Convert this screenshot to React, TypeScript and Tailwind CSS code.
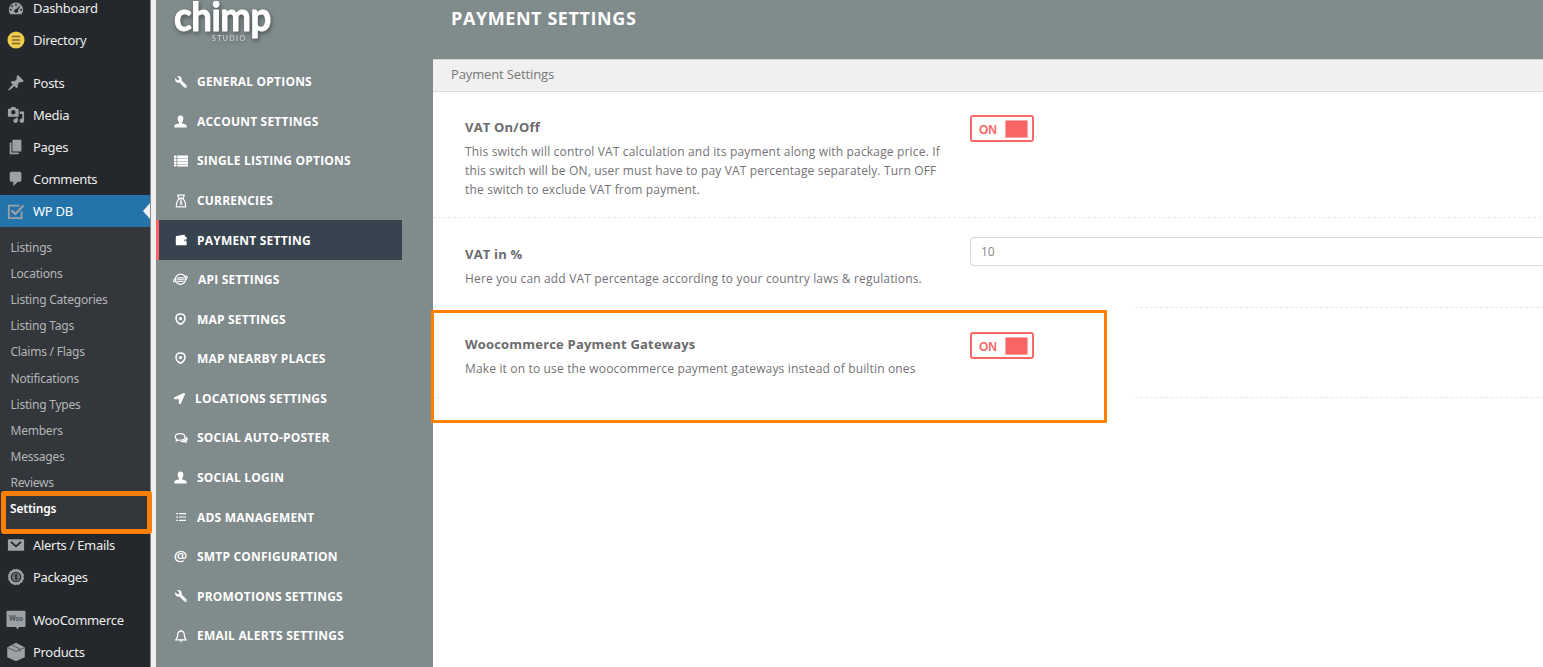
import React from "react";
import { FaWrench, FaLocationArrow } from "react-icons/fa";

const Svg = ({ children, className = "", vb = "0 0 20 20" }: { children: React.ReactNode; className?: string; vb?: string }) => (
  <svg viewBox={vb} className={className} fill="currentColor" aria-hidden="true">
    {children}
  </svg>
);

const d = "size-[18px]";

const dashIcons: Record<string, React.ReactNode> = {
  dashboard: (
    <Svg className={d}>
      <path
        fillRule="evenodd"
        d="M3.8 17h12.4A8 8 0 0 0 18 12a8 8 0 0 0-16 0c0 1.8.7 3.600 1.800 5zM10 5.200a1.100 1.100 0 1 1 0 2.200 1.100 1.100 0 0 1 0-2.200zM5.700 6.900a1.100 1.100 0 1 1 0 2.200 1.100 1.100 0 0 1 0-2.200zM15.200 6.500l-3 5.900c.6 1.300-.6 3-2.200 3-1.400 0-2.500-1.500-1.900-2.900.3-.8 1.200-1.200 2-1.200zM4.200 10.900a1.100 1.100 0 1 1 0 2.200 1.100 1.100 0 0 1 0-2.200zM15.800 10.900a1.100 1.100 0 1 1 0 2.200 1.100 1.100 0 0 1 0-2.200z"
      />
    </Svg>
  ),
  directory: (
    <Svg className={d}>
      <circle cx="10" cy="10" r="9.500" fill="#f0cb4b" />
      <path d="M5.500 6.200h9M5.500 10h9M5.500 13.800h9" stroke="#7b6a30" strokeWidth="1.600" />
    </Svg>
  ),
  posts: (
    <Svg className={d}>
      <path d="M10.440 3.020l1.820-1.820 6.360 6.350-1.830 1.820c-1.050-.68-2.480-.57-3.410.36l-.75.75c-.92.93-1.040 2.350-.35 3.410l-1.830 1.820-2.410-2.410-2.800 2.790c-.42.42-3.380 2.710-3.800 2.290s1.860-3.390 2.280-3.810l2.790-2.790L4.100 9.360l1.830-1.820c1.050.69 2.480.57 3.400-.36l.75-.75c.93-.92 1.050-2.350.36-3.410z" />
    </Svg>
  ),
  media: (
    <Svg className={d}>
      <path
        fillRule="evenodd"
        d="M13 11V4c0-.55-.45-1-1-1h-1.670L9 1H5L3.670 3H2c-.55 0-1 .45-1 1v7c0 .55.45 1 1 1h10c.55 0 1-.45 1-1zM7 4.500c1.380 0 2.500 1.120 2.500 2.500S8.380 9.500 7 9.500 4.500 8.380 4.500 7 5.620 4.500 7 4.500zM14 6h5v10.500c0 1.380-1.120 2.500-2.500 2.500S14 17.880 14 16.500s1.120-2.500 2.500-2.500c.17 0 .34.02.5.05V9h-3V6zm-4 8.050V13h2v3.500c0 1.380-1.120 2.500-2.500 2.500S7 17.880 7 16.500 8.120 14 9.500 14c.17 0 .34.02.5.05z"
      />
    </Svg>
  ),
  pages: (
    <Svg className={d}>
      <path d="M6 15V2h10v13H6zm-1 1h8v2H3V5h2v11z" />
    </Svg>
  ),
  comments: (
    <Svg className={d}>
      <path d="M5 2h9c1.100 0 2 .9 2 2v7c0 1.100-.9 2-2 2h-2l-5 5v-5H5c-1.100 0-2-.9-2-2V4c0-1.100.9-2 2-2z" />
    </Svg>
  ),
  wpdb: (
    <Svg className={d}>
      <path d="M16.200 10.500V18H2V4h12" fill="none" stroke="currentColor" strokeWidth="2" />
      <path d="M5 9.300l4.300 4L18.300 3.800" fill="none" stroke="currentColor" strokeWidth="2.300" />
    </Svg>
  ),
  email: (
    <Svg className={d}>
      <rect x="1" y="3.500" width="18" height="13" rx="0.800" />
      <path d="M4.500 6.500l5.500 5 5.500-5" fill="none" stroke="#24272b" strokeWidth="2" />
    </Svg>
  ),
  packages: (
    <Svg className={d}>
      <circle cx="10" cy="10" r="7.200" fill="none" stroke="currentColor" strokeWidth="2.600" />
      <circle cx="10" cy="10" r="8.600" fill="none" stroke="currentColor" strokeWidth="1" strokeDasharray="3 1.500" />
      <circle cx="10" cy="10" r="4.600" fill="#6f7377" />
      <path d="M11.500 8.300c-.5-.9-2.800-.9-2.800.3 0 1.500 2.800.9 2.800 2.500 0 1.300-2.400 1.300-3 .2M10.100 6.500v7" fill="none" stroke="#24272b" strokeWidth="1.100" />
    </Svg>
  ),
  woo: (
    <svg viewBox="0 0 20 20" className="size-[20px]" aria-hidden="true">
      <path d="M1.500.800h17a1 1 0 0 1 1 1V16a1 1 0 0 1-1 1H13l-1.500 2.500L10 17H1.500a1 1 0 0 1-1-1V1.800a1 1 0 0 1 1-1z" fill="#9ca1a6" />
      <text x="10" y="11.200" fontSize="6.500" fontWeight="700" fontFamily="Lato, sans-serif" textAnchor="middle" fill="#44484d">
        Woo
      </text>
    </svg>
  ),
  products: (
    <Svg className="size-[20px]">
      <path d="M10 .8l8.800 4.500v10L10 19.300l-8.800-4v-10z" />
      <path d="M1.500 5.500L10 9.500l8.500-4M5.500 2.800l8.600 4.300v2.500" fill="none" stroke="#4c5055" strokeWidth=".9" />
    </Svg>
  ),
};

const menu = [
  ["dashboard", "Dashboard"],
  ["directory", "Directory"],
  ["", ""],
  ["posts", "Posts"],
  ["media", "Media"],
  ["pages", "Pages"],
  ["comments", "Comments"],
];

const submenu = [
  "Listings",
  "Locations",
  "Listing Categories",
  "Listing Tags",
  "Claims / Flags",
  "Notifications",
  "Listing Types",
  "Members",
  "Messages",
  "Reviews",
  "Settings",
];

const lower = [
  ["email", "Alerts / Emails"],
  ["packages", "Packages"],
  ["", ""],
  ["woo", "WooCommerce"],
  ["products", "Products"],
];

function MenuRow({ icon, label, active = false }: { icon: string; label: string; active?: boolean }) {
  if (!icon) return <li className="h-[11px]" />;
  return (
    <li className={active ? "relative flex h-8 items-center bg-[#2573ab] text-white" : "flex h-8 items-center text-[#eceded]"}>
      <span className="flex w-[33px] shrink-0 items-center justify-center pr-[1px] text-[#9ca1a6]">{dashIcons[icon]}</span>
      <span className="text-[13px] leading-[18px] tracking-[-0.3px] whitespace-nowrap">{label}</span>
      {active && (
        <svg viewBox="0 0 7 16" className="absolute top-2 right-0 h-4 w-[7px]" fill="#f0f0f1">
          <path d="M7 0v16L0 8z" />
        </svg>
      )}
    </li>
  );
}

const s = "size-[13px]";
const person = (
  <Svg vb="0 0 16 16" className={s}>
    <path d="M8 .5c2.200 0 3.500 1.500 3.500 4 0 1.800-.8 3.500-1.700 4.300v1.300l4.500 1.700c.9.4 1.300 1.200 1.300 3.700H.4c0-2.500.4-3.300 1.300-3.700l4.500-1.700V8.800C5.300 8 4.500 6.300 4.500 4.500c0-2.500 1.300-4 3.500-4z" />
  </Svg>
);
const pin = (
  <Svg vb="0 0 16 16" className={s}>
    <path d="M8 1.200c3.200 0 5.500 2.200 5.500 5.200 0 3.300-2.600 6-5.500 7.400C5.100 12.400 2.500 9.700 2.500 6.400 2.500 3.400 4.800 1.200 8 1.200z" fill="none" stroke="currentColor" strokeWidth="1.900" />
    <circle cx="8" cy="6.800" r="2" />
  </Svg>
);

const options: { label: string; icon: React.ReactNode; gap?: string }[] = [
  { label: "GENERAL OPTIONS", icon: <FaWrench className="size-[12px] -scale-x-100" /> },
  { label: "ACCOUNT SETTINGS", icon: person },
  {
    label: "SINGLE LISTING OPTIONS",
    icon: (
      <Svg vb="0 0 14 12" className="h-[12px] w-[14px]">
        <path d="M0 .5h2.500V3H0zM3.300.5H14V3H3.300zM0 3.600h2.500V6H0zM3.300 3.600H14V6H3.300zM0 6.600h2.500V9H0zM3.300 6.600H14V9H3.300zM0 9.600h2.500v1.900H0zM3.300 9.600H14v1.900H3.300z" />
      </Svg>
    ),
  },
  {
    label: "CURRENCIES",
    icon: (
      <Svg vb="0 0 14 16" className="h-[14px] w-[12px]">
        <path d="M4.300 4.600L3.200 1.200h7.600L9.700 4.600zM4.500 5.500h5c2 1.800 2.900 4 2.900 9.300H1.600c0-5.300.9-7.500 2.900-9.300z" fill="none" stroke="currentColor" strokeWidth="1.400" />
        <path d="M8.500 8.300c-.8-.7-2.700-.5-2.700.6 0 1.300 2.700.7 2.700 2.100 0 1.100-2.100 1.200-3 .4M7 7v6" fill="none" stroke="currentColor" strokeWidth="1" />
      </Svg>
    ),
  },
  {
    label: "PAYMENT SETTING",
    icon: (
      <Svg vb="0 0 12 12" className="h-[12px] w-[12px]">
        <path fillRule="evenodd" d="M.8 3C.8 2.300 1.300 2 2 1.900L8.500.8c.9-.1 1.400.2 1.400 1v1h.6c.7 0 1.200.4 1.200 1v1.600H10c-1.200 0-1.200 1.900 0 1.900h1.700v2.900c0 .7-.5 1.100-1.200 1.100H1.900C1.200 11.300.8 10.900.8 10.200z" />
        <circle cx="10.300" cy="6.350" r=".6" />
      </Svg>
    ),
  },
  {
    label: "API SETTINGS",
    gap: "ml-[10px]",
    icon: (
      <Svg vb="0 0 16 14" className="h-[13px] w-[15px]">
        <circle cx="8" cy="6.700" r="5.500" fill="none" stroke="currentColor" strokeWidth="1.400" />
        <path d="M3 5.500C-.5 8-.2 9.800 2.800 9.300M13 7.500c3.500-2.500 3-4.600-.5-4" fill="none" stroke="currentColor" strokeWidth="1.200" />
        <path d="M4.500 4.700h7v1.200h-7zM3.800 6.700h8.400v1.200H3.800zM5 8.700h6v.9H5z" />
      </Svg>
    ),
  },
  { label: "MAP SETTINGS", icon: pin },
  { label: "MAP NEARBY PLACES", icon: pin },
  { label: "LOCATIONS SETTINGS", gap: "-ml-px pl-[8px]", icon: <FaLocationArrow className="mr-[2px] size-[11px]" /> },
  {
    label: "SOCIAL AUTO-POSTER",
    icon: (
      <Svg vb="0 0 16 14" className="h-[12px] w-[14px]">
        <path d="M7 2c3.300 0 5.600 1.600 5.600 3.800S10.300 9.600 7 9.600c-.6 0-1.300-.1-1.800-.2L2.500 10.600l.7-2C2 7.900 1.300 6.900 1.300 5.800 1.300 3.600 3.700 2 7 2z" fill="none" stroke="currentColor" strokeWidth="1.400" />
        <path d="M13.700 5.200c1.400.7 2.200 1.800 2.200 3 0 1.200-.7 2.200-1.700 2.800l.9 2.500-3-1.600c-2.200.3-4.300-.3-5.300-1.400 4.200 0 7.500-2 6.900-5.300z" />
      </Svg>
    ),
  },
  { label: "SOCIAL LOGIN", icon: person },
  {
    label: "ADS MANAGEMENT",
    icon: (
      <Svg vb="0 0 10 10" className="size-[10px]">
        <path d="M.3 1h1.700v1.300H.3zM3 1h7v1.200H3zM.3 4.400h1.700v1.300H.3zM3 4.400h7v1.200H3zM.3 7.800h1.700v1.300H.3zM3 7.800h7V9H3z" />
      </Svg>
    ),
  },
  { label: "SMTP CONFIGURATION", icon: <span className="-mt-[3px] block text-[15px] leading-none font-semibold">@</span> },
  { label: "PROMOTIONS SETTINGS", icon: <FaWrench className="size-[12px] -scale-x-100" /> },
  {
    label: "EMAIL ALERTS SETTINGS",
    icon: (
      <Svg vb="0 0 14 16" className="h-[14px] w-[12px]">
        <path d="M7 2.200c-2.700 0-3.800 1.900-3.800 4.300 0 3-.6 4.500-2.300 6h12.200c-1.700-1.500-2.300-3-2.300-6 0-2.400-1.100-4.300-3.800-4.300z" fill="none" stroke="currentColor" strokeWidth="1.400" />
        <path d="M6.300.600h1.400v1.500H6.300zM5.300 13.200h3.400c0 2.200-3.400 2.200-3.400 0z" />
      </Svg>
    ),
  },
];

function Toggle() {
  return (
    <div className="flex h-[27px] w-[64px] items-center justify-between rounded-[3px] border-2 border-[#f96868] bg-white pr-[4px] pl-[7px]">
      <span className="mt-[3px] font-['Liberation_Sans',sans-serif] text-[12px] leading-none font-bold text-[#f96868]">ON</span>
      <span className="h-[18px] w-[23px] rounded-[1px] border border-[#fba5a5] bg-[#f96464]" />
    </div>
  );
}

const dash = "h-px bg-[repeating-linear-gradient(90deg,#e9e9e9_0_3px,transparent_3px_5px)]";

function Divider({ stub }: { stub?: string }) {
  if (!stub) return <div className={dash} />;
  return (
    <div className="flex h-px justify-between">
      <div className={dash + " " + stub} />
      <div className={dash + " w-[408px]"} />
    </div>
  );
}

function Field({ title, desc, height, pad, stub, children }: { title: string; desc: string; height: string; pad: string; stub?: string; children: React.ReactNode }) {
  return (
    <section className={"flex flex-col justify-between " + height}>
      <div className={"flex pl-8 " + pad}>
        <div className="w-[505px] shrink-0 pt-[6px] pr-[20px]">
          <h3 className="text-[13px] leading-[20px] font-bold tracking-[0.19px] text-[#6b6b6d]">{title}</h3>
          <p className="mt-[5px] text-[12px] leading-[19px] tracking-[0.16px] whitespace-pre text-[#737376]">{desc}</p>
        </div>
        <div className="min-w-0 flex-1">{children}</div>
      </div>
      <Divider stub={stub} />
    </section>
  );
}

export default function App() {
  return (
    <div className="relative flex h-[667px] w-[1543px] overflow-hidden bg-white font-['Open_Sans',sans-serif]">
      <aside className="h-full w-[151px] shrink-0 overflow-hidden border-r border-[#85888b] bg-[#24272b] font-['Noto_Sans','Open_Sans',sans-serif]">
        <ul className="-mt-2">
          {menu.map(([icon, label], i) => (
            <MenuRow key={i} icon={icon} label={label} />
          ))}
          <MenuRow icon="wpdb" label="WP DB" active />
          <li className="bg-[#33363b] pt-[8px] pb-[7px]">
            <ul>
              {submenu.map((item) => (
                <li
                  key={item}
                  className={
                    item === "Settings"
                      ? "flex h-[26.1px] items-center pl-[10px] text-[12px] font-semibold tracking-[-0.2px] text-white"
                      : "flex h-[26.1px] items-center pl-[10.5px] text-[12px] tracking-[-0.22px] text-[#b4b6b8]"
                  }
                >
                  {item}
                </li>
              ))}
            </ul>
          </li>
          {lower.map(([icon, label], i) => (
            <MenuRow key={i} icon={icon} label={label} />
          ))}
        </ul>
      </aside>
      <div className="h-full w-[5px] shrink-0 bg-[#f0f0f1]" />
      <div className="flex h-full min-w-0 flex-1 bg-[#808b8c]">
        <nav className="w-[277px] shrink-0">
          <div className="h-[62px] pt-px pl-[18px]">
            <svg viewBox="0 0 104 46" className="h-[46px] w-[104px] [filter:drop-shadow(1px_2px_2px_rgba(0,0,0,0.4))]" fill="#fff">
              <g transform="translate(0 30) scale(0.92 1)">
                <text x="0" y="0" fontFamily="Lato, sans-serif" fontWeight="700" fontSize="40" textLength="106" lengthAdjust="spacing" stroke="#fff" strokeWidth="0.900" strokeLinejoin="round">
                  chimp
                </text>
              </g>
              <text x="38" y="39.500" fontFamily="Lato, sans-serif" fontSize="7" textLength="33" fillOpacity=".65">
                STUDIO
              </text>
            </svg>
          </div>
          <ul>
            {options.map((o) => (
              <li
                key={o.label}
                className={
                  o.label === "PAYMENT SETTING"
                    ? "flex h-[39.58px] w-[246px] items-center border-l-[3px] border-[#f96464] bg-[#37444f] pl-[14px] text-white"
                    : "flex h-[39.58px] w-[246px] items-center pl-[17px] text-white"
                }
              >
                <span className="flex min-w-[15px] items-center justify-center">{o.icon}</span>
                <span className={"mt-px text-[12px] font-bold tracking-[0.2px] whitespace-nowrap " + (o.gap ?? "ml-[9px]")}>{o.label}</span>
              </li>
            ))}
          </ul>
        </nav>
        <main className="flex min-w-0 flex-1 flex-col">
          <h1 className="flex h-[59px] items-start pt-[6px] pl-[18px] text-[18px] leading-[24px] font-bold tracking-[0.58px] text-white">PAYMENT SETTINGS</h1>
          <div className="flex-1 bg-white">
            <h2 className="flex h-[33px] items-center border-t border-b border-t-[#cfd2d2] border-b-[#dcdcdc] bg-[#f0f0f0] pb-px pl-[18px] text-[13px] tracking-[-0.13px] text-[#777]">
              Payment Settings
            </h2>
            <Field
              title="VAT On/Off"
              desc={"This switch will control VAT calculation and its payment along with package price. If\nthis switch will be ON, user must have to pay VAT percentage separately. Turn OFF\nthe switch to exclude VAT from payment."}
              height="h-[126px]"
              pad="pt-[19px]"
            >
              <div className="pt-1">
                <Toggle />
              </div>
            </Field>
            <Field title="VAT in %" desc="Here you can add VAT percentage according to your country laws & regulations." height="h-[90px]" pad="pt-[20px]" stub="w-[3px]">
              <div className="-mt-px flex h-[29px] items-center rounded-l-[4px] border border-r-0 border-[#d9d9d9] pl-[10px] text-[12px] text-[#85858a]">10</div>
            </Field>
            <Field title="Woocommerce Payment Gateways" desc="Make it on to use the woocommerce payment gateways instead of builtin ones" height="h-[90px]" pad="pt-[20px]" stub="w-[8px]">
              <div className="pt-1">
                <Toggle />
              </div>
            </Field>
          </div>
        </main>
      </div>
      <div className="pointer-events-none absolute top-[491px] left-[1px] h-[43px] w-[151px] rounded-[3px] border-5 border-[#ff8000]" />
      <div className="pointer-events-none absolute top-[310px] left-[431px] h-[113px] w-[676px] rounded-[1px] border-3 border-[#ff8000]" />
    </div>
  );
}
